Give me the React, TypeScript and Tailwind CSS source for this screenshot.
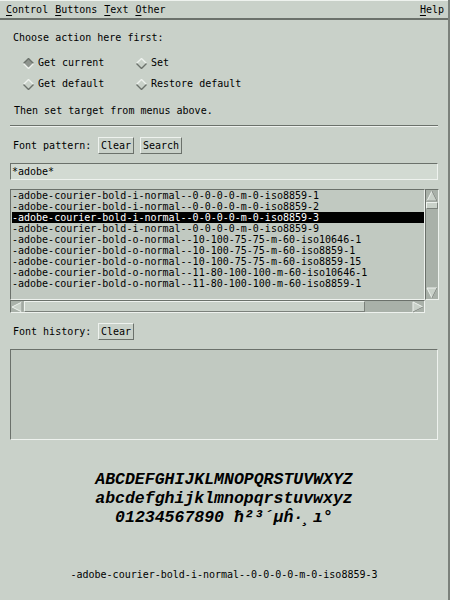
import React from "react";

const fonts = [
  "-adobe-courier-bold-i-normal--0-0-0-0-m-0-iso8859-1",
  "-adobe-courier-bold-i-normal--0-0-0-0-m-0-iso8859-2",
  "-adobe-courier-bold-i-normal--0-0-0-0-m-0-iso8859-3",
  "-adobe-courier-bold-i-normal--0-0-0-0-m-0-iso8859-9",
  "-adobe-courier-bold-o-normal--10-100-75-75-m-60-iso10646-1",
  "-adobe-courier-bold-o-normal--10-100-75-75-m-60-iso8859-1",
  "-adobe-courier-bold-o-normal--10-100-75-75-m-60-iso8859-15",
  "-adobe-courier-bold-o-normal--11-80-100-100-m-60-iso10646-1",
  "-adobe-courier-bold-o-normal--11-80-100-100-m-60-iso8859-1",
];

function Diamond({ on }: { on?: boolean }) {
  return (
    <svg width="11" height="11" viewBox="0 0 11 11" className="shrink-0">
      <polygon points="5.5,0.5 10.5,5.5 5.5,10.5 0.5,5.5" fill={on ? "#8f958f" : "#c9d1c9"} />
      <polyline points="0.5,5.5 5.5,0.5 10.5,5.5" fill="none" stroke={on ? "#6b716b" : "#eef2ee"} strokeWidth="1.4" />
      <polyline points="0.5,5.5 5.5,10.5 10.5,5.5" fill="none" stroke={on ? "#eef2ee" : "#6b716b"} strokeWidth="1.4" />
    </svg>
  );
}

function Arrow({ dir }: { dir: "up" | "down" | "left" | "right" }) {
  const pts = {
    up: "6,1 11,11 1,11",
    down: "1,1 11,1 6,11",
    left: "1,6 11,1 11,11",
    right: "1,1 11,6 1,11",
  }[dir];
  return (
    <svg width="12" height="12" viewBox="0 0 12 12" className="shrink-0">
      <polygon points={pts} fill="#c9d1c9" stroke="#eef2ee" strokeWidth="1" />
      {dir === "up" && <polyline points="6,1 11,11 1,11" fill="none" stroke="#7b817b" strokeWidth="1" />}
      {dir === "down" && <polyline points="11,1 6,11" fill="none" stroke="#7b817b" strokeWidth="1" />}
      {dir === "right" && <polyline points="11,6 1,11" fill="none" stroke="#7b817b" strokeWidth="1" />}
      {dir === "left" && <polyline points="11,1 11,11" fill="none" stroke="#7b817b" strokeWidth="1" />}
    </svg>
  );
}

function Btn({ label, w }: { label: string; w: string }) {
  return (
    <div
      className={`${w} h-[17px] flex items-center justify-center border border-t-[#eef2ee] border-l-[#eef2ee] border-b-[#6b716b] border-r-[#6b716b]`}
    >
      {label}
    </div>
  );
}

function Mn({ c }: { c: string }) {
  return <span className="underline underline-offset-[2px]">{c}</span>;
}

export default function App() {
  return (
    <div
      className="w-[450px] h-[600px] bg-[#c9d1c9] text-black text-[10px] leading-[12px] flex flex-col border-r-2 border-r-[#7b817b] overflow-hidden"
      style={{ fontFamily: '"DejaVu Sans Mono", monospace' }}
    >
      {/* menu bar */}
      <div className="h-[20px] shrink-0 flex items-center pl-[6px] pr-[4px] gap-[7px] border-t border-t-[#eef2ee] border-b-2 border-b-[#6b716b]">
        <span><Mn c="C" />ontrol</span>
        <span><Mn c="B" />uttons</span>
        <span><Mn c="T" />ext</span>
        <span><Mn c="O" />ther</span>
        <span className="ml-auto"><Mn c="H" />elp</span>
      </div>

      <div className="mt-[11px] pl-[13px] h-[14px] flex items-center">Choose action here first:</div>

      <div className="mt-[11px] h-[14px] flex items-center">
        <div className="w-[136px] pl-[23px] flex items-center gap-[4px]">
          <Diamond on />
          <span>Get current</span>
        </div>
        <div className="flex items-center gap-[4px]">
          <Diamond />
          <span>Set</span>
        </div>
      </div>
      <div className="mt-[7px] h-[14px] flex items-center">
        <div className="w-[136px] pl-[23px] flex items-center gap-[4px]">
          <Diamond />
          <span>Get default</span>
        </div>
        <div className="flex items-center gap-[4px]">
          <Diamond />
          <span>Restore default</span>
        </div>
      </div>

      <div className="mt-[13px] pl-[14px] h-[14px] flex items-center">Then set target from menus above.</div>

      <div className="mt-[7px] mx-[10px] h-[2px] border-t border-t-[#6b716b] border-b border-b-[#eef2ee]" />

      <div className="mt-[10px] h-[17px] flex items-center pl-[13px]">
        <span className="w-[85px]">Font pattern:</span>
        <div className="flex gap-[6px]">
          <Btn label="Clear" w="w-[36px]" />
          <Btn label="Search" w="w-[42px]" />
        </div>
      </div>

      <div className="mt-[9px] mx-[10px] h-[17px] bg-[#d2dad2] border border-t-[#6b716b] border-l-[#6b716b] border-b-[#eef2ee] border-r-[#eef2ee] flex items-center pl-[1px]">
        *adobe*
      </div>

      <div className="mt-[9px] ml-[10px] flex">
        <div className="w-[415px] flex flex-col">
          <div className="h-[111px] bg-[#c1c9c1] border border-t-[#6b716b] border-l-[#6b716b] border-b-[#eef2ee] border-r-[#eef2ee] pl-[1px]">
            {fonts.map((f, i) => (
              <div
                key={f}
                className={`h-[11px] leading-[11px] whitespace-nowrap ${i === 2 ? "bg-black text-white" : ""}`}
              >
                {f}
              </div>
            ))}
          </div>
          <div className="h-[13px] bg-[#a9b1a9] border border-t-[#6b716b] border-l-[#6b716b] border-b-[#eef2ee] border-r-[#eef2ee] flex items-center">
            <Arrow dir="left" />
            <div className="ml-[1px] w-[341px] h-[11px] bg-[#c9d1c9] border border-t-[#eef2ee] border-l-[#eef2ee] border-b-[#7b817b] border-r-[#7b817b]" />
            <div className="flex-1" />
            <Arrow dir="right" />
          </div>
        </div>
        <div className="w-[14px] h-[111px] bg-[#a9b1a9] border border-t-[#6b716b] border-l-[#6b716b] border-b-[#eef2ee] border-r-[#eef2ee] flex flex-col items-center">
          <Arrow dir="up" />
          <div className="w-[12px] h-[7px] bg-[#c9d1c9] border border-t-[#eef2ee] border-l-[#eef2ee] border-b-[#7b817b] border-r-[#7b817b]" />
          <div className="flex-1" />
          <Arrow dir="down" />
        </div>
      </div>

      <div className="mt-[10px] h-[17px] flex items-center pl-[13px]">
        <span className="w-[85px]">Font history:</span>
        <Btn label="Clear" w="w-[36px]" />
      </div>

      <div className="mt-[9px] mx-[10px] h-[91px] bg-[#c1c9c1] border border-t-[#6b716b] border-l-[#6b716b] border-b-[#eef2ee] border-r-[#eef2ee]" />

      <div
        className="mt-[30px] flex flex-col items-center text-[16.5px] leading-[19px] font-bold italic"
        style={{ fontFamily: '"Liberation Mono", "Courier New", monospace' }}
      >
        <div>ABCDEFGHIJKLMNOPQRSTUVWXYZ</div>
        <div>abcdefghijklmnopqrstuvwxyz</div>
        <div>01234567890 ħ²³´µĥ·¸ı°</div>
      </div>

      <div className="mt-[42px] h-[12px] flex items-center justify-center">
        -adobe-courier-bold-i-normal--0-0-0-0-m-0-iso8859-3
      </div>
    </div>
  );
}
